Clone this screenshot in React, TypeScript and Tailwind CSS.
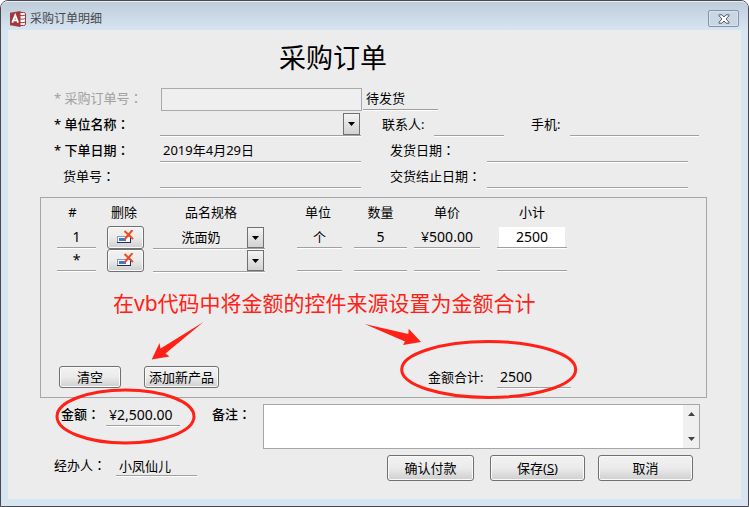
import type { ReactNode } from "react";

const line =
  "h-full w-full min-w-0 rounded-none border-b border-[#a0a0a0] bg-transparent shadow-[0_1px_0_#fff] outline-none";

function Label({ htmlFor, text, colon, className = "" }: { htmlFor: string; text: string; colon?: boolean; className?: string }) {
  return (
    <label htmlFor={htmlFor} className={`whitespace-nowrap text-[13px] leading-5 ${className}`}>
      {text}
      {/* TC keeps the full-width colon in the middle of its cell */}
      {colon && (
        <span lang="zh-TW" className="font-['Noto_Sans_CJK_TC',sans-serif]">
          ：
        </span>
      )}
    </label>
  );
}

function Field({ id, value = "", className = "" }: { id: string; value?: string; className?: string }) {
  return (
    <div className={`min-w-0 ${className}`}>
      <input id={id} aria-label={id} defaultValue={value} className={line} />
    </div>
  );
}

function Combo({ id, value = "", className = "" }: { id: string; value?: string; className?: string }) {
  return (
    <div className={`relative min-w-0 ${className}`}>
      <select id={id} aria-label={id} defaultValue={value} className={`appearance-none pr-4 text-center ${line}`}>
        <option value={value}>{value}</option>
      </select>
      <span className="pointer-events-none absolute inset-y-px right-px flex w-[17px] items-center justify-center border border-[#707070] bg-linear-to-b from-[#f4f4f4] to-[#d2d2d2]">
        <svg width="7" height="4" viewBox="0 0 7 4">
          <path d="M0 0h7L3.5 4z" fill="#000" />
        </svg>
      </span>
    </div>
  );
}

function Button({ children, className = "", label }: { children: ReactNode; className?: string; label?: string }) {
  return (
    <button
      type="button"
      aria-label={label}
      className={`flex items-center justify-center whitespace-nowrap rounded-[3px] border border-[#707070] bg-linear-to-b from-[#f2f2f2] from-0% via-[#ebebeb] via-50% to-[#cfcfcf] text-[13px] leading-5 shadow-[inset_0_0_0_1px_#fafafa] ${className}`}
    >
      {children}
    </button>
  );
}

function DeleteIcon() {
  return (
    <svg width="18" height="16" viewBox="0 0 18 16">
      <rect x="0.5" y="6.5" width="13" height="6" fill="#fff" stroke="#8a9bb5" />
      <path d="M0 12.5h14M13.5 7v6" stroke="#1f2f55" />
      <rect x="2" y="8" width="7" height="3" fill="#3f78dc" />
      <path d="M7.5 1L16 9M15.5 0L7.5 9.5" stroke="#f04a24" strokeWidth="2" fill="none" />
    </svg>
  );
}

function AccessIcon() {
  return (
    <svg width="16" height="16" viewBox="0 0 16 16">
      <path d="M8 1.5h5.5q2 .2 2 1.2v10.6q0 1-2 1.2H8z" fill="#fff" stroke="#a4373a" />
      <path d="M10 4.5q3 .6 5.5-.5M10 8q3 .6 5.5-.5M10 11.5q3 .6 5.5-.5" stroke="#a4373a" fill="none" />
      <path d="M0 1.8L10.5 0v16L0 14.2z" fill="#a4373a" />
      <path d="M2.3 11.6L5.2 4.3l2.9 7.3M3.4 9.3h3.6" stroke="#fff" strokeWidth="1.8" fill="none" />
    </svg>
  );
}

const head = ["#", "删除", "品名规格", "单位", "数量", "单价", "小计"];
const headGaps = ["pr-[19px]", "pr-3", "pr-7", "pr-[15px]", "pr-[7px]", "pr-[17px]", ""];
const gaps = ["pr-[11px]", "pr-[9px]", "pr-8", "pr-3", "pr-[7px]", "pr-[17px]", ""];

const items = [
  { no: "1", name: "洗面奶", unit: "个", qty: "5", price: "¥500.00", total: "2500" },
  { no: "*", name: "", unit: "", qty: "", price: "", total: "" },
];

function Items() {
  return (
    <table className="ml-4 w-[510px] table-fixed border-collapse text-center">
      <colgroup>
        <col className="w-[50px]" />
        <col className="w-[46px]" />
        <col className="w-36" />
        <col className="w-[57px]" />
        <col className="w-[60px]" />
        <col className="w-[83px]" />
        <col className="w-[70px]" />
      </colgroup>
      <thead>
        <tr className="h-7">
          {head.map((text, i) => (
            <th key={text} className={`whitespace-nowrap p-0 text-[13px] font-normal leading-5 ${headGaps[i]}`}>
              {text}
            </th>
          ))}
        </tr>
      </thead>
      <tbody className="text-sm">
        {items.map((item) => (
          <tr key={item.no} className="h-[23px] align-top">
            <td className={`p-0 ${gaps[0]}`}>
              <Field id={`序号${item.no}`} value={item.no} className="h-[22px] [&>input]:text-center" />
            </td>
            <td className={`p-0 ${gaps[1]}`}>
              <Button label="删除" className="h-[23px] w-full">
                <DeleteIcon />
              </Button>
            </td>
            <td className={`p-0 text-[13px] ${gaps[2]}`}>
              <Combo id={`品名规格${item.no}`} value={item.name} className="h-[23px]" />
            </td>
            <td className={`p-0 text-[13px] ${gaps[3]}`}>
              <Field id={`单位${item.no}`} value={item.unit} className="h-[22px] [&>input]:text-center" />
            </td>
            <td className={`p-0 ${gaps[4]}`}>
              <Field id={`数量${item.no}`} value={item.qty} className="h-[22px] [&>input]:text-center" />
            </td>
            <td className={`p-0 ${gaps[5]}`}>
              <Field id={`单价${item.no}`} value={item.price} className="h-[22px] [&>input]:text-center" />
            </td>
            <td className="p-0">
              <Field
                id={`小计${item.no}`}
                value={item.total}
                className={`h-[22px] [&>input]:text-center ${
                  item.total
                    ? "bg-linear-to-b from-white to-white bg-[length:calc(100%-4px)_calc(100%-2px)] bg-center bg-no-repeat"
                    : ""
                }`}
              />
            </td>
          </tr>
        ))}
      </tbody>
    </table>
  );
}

function Notes() {
  return (
    <>
      <p className="pointer-events-none absolute left-[105px] top-[258px] whitespace-nowrap text-[21px] leading-[30px] text-[#ff2116]">
        在vb代码中将金额的控件来源设置为金额合计
      </p>
      <svg
        className="pointer-events-none absolute left-0 top-0"
        width="733"
        height="469"
        viewBox="8 30 733 469"
        fill="none"
      >
        <ellipse cx="125.5" cy="416.5" rx="68.5" ry="26.5" stroke="#ff2116" strokeWidth="3" />
        <ellipse cx="488.7" cy="369.5" rx="87" ry="28" stroke="#ff2116" strokeWidth="3" />
        <path d="M151.7 359.5L159.5 343l1 5.5L203.5 322 165.5 353.5l4 3z" fill="#ff2116" />
        <path d="M364.7 324l43.6 10 .4-5.2L421 342l-18 3 2-3.5z" fill="#ff2116" />
      </svg>
    </>
  );
}

export default function App() {
  return (
    <div className="flex min-h-screen flex-col rounded-t-lg border border-[#4b494f] bg-[#d7e4f2] px-[7px] pb-[7px] font-['Noto_Sans','Noto_Sans_CJK_SC',sans-serif] text-black">
      <header className="-mx-[7px] flex h-[29px] items-center gap-1 rounded-t-[7px] border-t border-[#e6edf5] bg-linear-to-b from-[#bfccda] to-[#d7e4f2] pl-[9px] pr-[9px] pt-[5px]">
        <AccessIcon />
        <h1 className="flex-1 text-xs text-[#44484e]">采购订单明细</h1>
        <button
          type="button"
          aria-label="关闭"
          className="flex h-[17px] w-[31px] items-center justify-center rounded-[2px] border border-[#8591ad] bg-[#c9d6e4] shadow-[inset_0_0_0_1px_#d9e3ee]"
        >
          <svg width="12" height="10" viewBox="0 0 12 10">
            <path d="M1 .8h3L6 3l2-2.2h3v1L8 5l3 3.2v1H8L6 7 4 9.2H1v-1L4 5 1 1.8z" fill="#fff" stroke="#55586a" />
          </svg>
        </button>
      </header>

      <main className="relative flex-1 bg-[#ececec]">
        <h2 className="pl-[271px] text-[27px] leading-[55px]">采购订单</h2>

        <div className="pl-[46px] pr-[42px] text-[13px]">
          <div className="grid h-[26px] grid-cols-[107px_201fr_1px_75fr_261px] items-center">
            <Label htmlFor="order" text="* 采购订单号" colon className="text-[#a0a0a0]" />
            <input id="order" disabled className="h-[23px] min-w-0 self-end border border-[#a9a9b0] bg-[#efefef]" />
            <span />
            <Field id="状态" value="待发货" className="h-6 [&>input]:px-[3px]" />
          </div>
          <div className="grid h-[26px] grid-cols-[106px_201fr_21px_52px_70fr_27px_39px_129fr] items-center">
            <Label htmlFor="company" text="* 单位名称" colon className="font-medium" />
            <Combo id="company" className="h-6" />
            <span />
            <Label htmlFor="contact" text="联系人:" />
            <Field id="contact" className="h-6" />
            <span />
            <Label htmlFor="phone" text="手机:" />
            <Field id="phone" className="h-6" />
          </div>
          <div className="grid h-[26px] grid-cols-[106px_201fr_29px_97px_201fr_11px] items-center">
            <Label htmlFor="orderDate" text="* 下单日期" colon className="font-medium" />
            <Field id="orderDate" value="2019年4月29日" className="h-6 [&>input]:px-[3px]" />
            <span />
            <Label htmlFor="shipDate" text="发货日期" colon />
            <Field id="shipDate" className="h-6" />
          </div>
          <div className="grid h-[26px] grid-cols-[106px_201fr_29px_97px_201fr_11px] items-center">
            <Label htmlFor="billNo" text="货单号" colon className="pl-[9px]" />
            <Field id="billNo" className="h-6" />
            <span />
            <Label htmlFor="dueDate" text="交货结止日期" colon />
            <Field id="dueDate" className="h-6" />
          </div>
        </div>

        <section className="ml-8 mr-[34px] mt-2 flex min-h-[201px] flex-col justify-between border border-[#a5a5ad] pb-[9px]">
          <Items />
          <div className="flex h-[22px] items-center pl-[18px]">
            <Button className="h-full w-[62px]">清空</Button>
            <Button className="ml-[23px] h-full w-[75px]">添加新产品</Button>
            <Label htmlFor="sum" text="金额合计:" className="ml-[209px] w-[69px]" />
            <Field id="sum" value="2500" className="h-full w-[74px] text-sm [&>input]:px-[3px]" />
          </div>
        </section>

        <div className="mt-1.5 flex pl-[53px] pr-[41px]">
          <Label htmlFor="amount" text="金额" colon className="w-[45px] font-medium" />
          <Field id="amount" value="¥2,500.00" className="h-[22px] w-[74px] text-sm [&>input]:px-[3px]" />
          <Label htmlFor="memo" text="备注" colon className="ml-8 w-[51px] font-medium" />
          <div className="flex h-[45px] flex-1 border border-[#a5a5ad] bg-white">
            <textarea id="memo" className="flex-1 resize-none outline-none" />
            <div className="flex w-4 flex-col items-center justify-between bg-[#f0f0f0] py-[7px]">
              <svg width="7" height="4" viewBox="0 0 7 4">
                <path d="M0 4h7L3.5 0z" fill="#444" />
              </svg>
              <svg width="7" height="4" viewBox="0 0 7 4">
                <path d="M0 0h7L3.5 4z" fill="#444" />
              </svg>
            </div>
          </div>
        </div>

        <div className="mt-1.5 flex pb-[18px] pl-[46px] pr-12">
          <Label htmlFor="handler" text="经办人" colon className="w-[62px]" />
          <Field id="handler" value="小凤仙儿" className="h-[21px] w-[81px] text-[13px] [&>input]:px-[3px]" />
          <div className="ml-auto flex h-[26px]">
            <Button className="w-[87px]">确认付款</Button>
            <Button className="ml-4 w-[95px]">
              保存(<span className="underline">S</span>)
            </Button>
            <Button className="ml-[13px] w-[95px]">取消</Button>
          </div>
        </div>

        <Notes />
      </main>
    </div>
  );
}
